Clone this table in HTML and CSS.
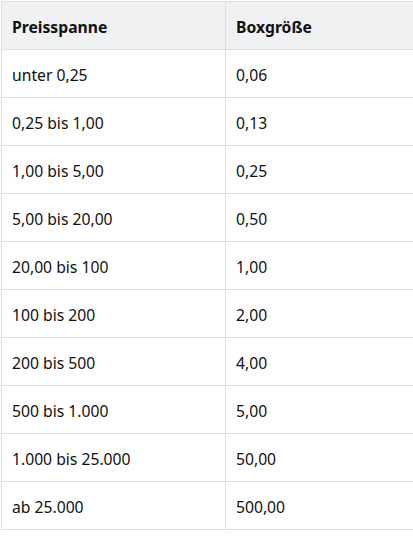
FILE: index.html
```html
<!DOCTYPE html>
<html lang="de">
<head>
<meta charset="utf-8">
<link rel="stylesheet" href="styles.css">
</head>
<body>
<table class="price-table">
  <thead>
    <tr><th class="col-range">Preisspanne</th><th>Boxgröße</th></tr>
  </thead>
  <tbody>
    <tr><td>unter 0,25</td><td>0,06</td></tr>
    <tr><td>0,25 bis 1,00</td><td>0,13</td></tr>
    <tr><td>1,00 bis 5,00</td><td>0,25</td></tr>
    <tr><td>5,00 bis 20,00</td><td>0,50</td></tr>
    <tr><td>20,00 bis 100</td><td>1,00</td></tr>
    <tr><td>100 bis 200</td><td>2,00</td></tr>
    <tr><td>200 bis 500</td><td>4,00</td></tr>
    <tr><td>500 bis 1.000</td><td>5,00</td></tr>
    <tr><td>1.000 bis 25.000</td><td>50,00</td></tr>
    <tr><td>ab 25.000</td><td>500,00</td></tr>
  </tbody>
</table>
</body>
</html>
```
FILE: styles.css
```css
html, body {
  margin: 0;
  padding: 0;
  overflow: hidden;
  background: #ffffff;
}
body {
  padding: 1px 0 0 1px;
  font-family: "Noto Sans", "Open Sans", sans-serif;
  font-size: 15.7px;
  color: #111111;
}
.price-table {
  border-collapse: collapse;
  width: 430px;
  table-layout: fixed;
}
.price-table th,
.price-table td {
  border: 1px solid #dcdde1;
  padding: 14px 10px 10px 10px;
  line-height: 23px;
  text-align: left;
  vertical-align: middle;
}
.price-table th {
  background: #f0f1f3;
  font-weight: 700;
}
.col-range {
  width: 203px;
}
```
